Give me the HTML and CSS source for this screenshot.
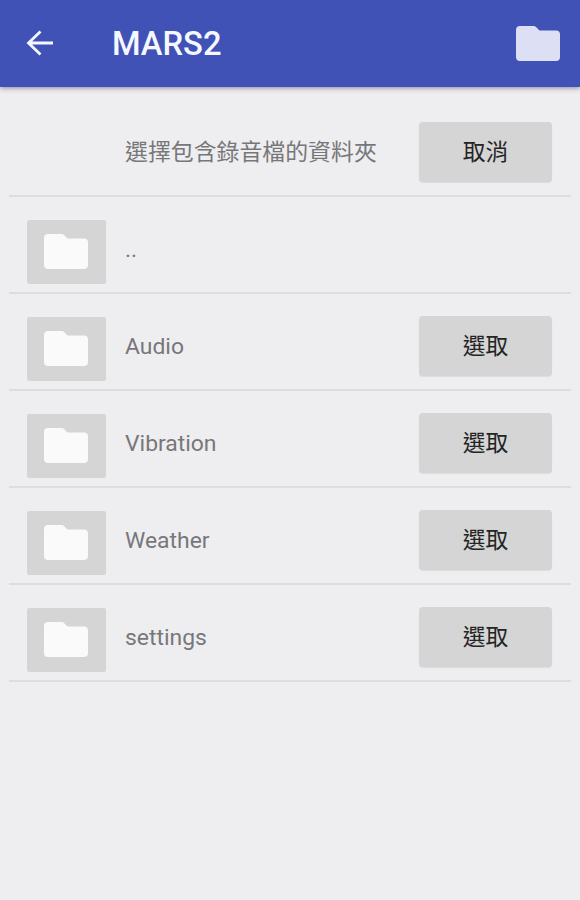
FILE: index.html
```html
<!DOCTYPE html>
<html lang="zh-Hant">
<head>
  <meta charset="UTF-8" />
  <meta name="viewport" content="width=device-width, initial-scale=1.0"/>
  <title>MARS2</title>
  <link rel="stylesheet" href="styles.css">
</head>
<body>
  <svg class="defs" width="0" height="0">
    <symbol id="folder" viewBox="0 0 44 35">
      <path d="M4 0H17.500Q19 0 20 1L23.500 4.500H40Q44 4.500 44 8.500V31Q44 35 40 35H4Q0 35 0 31V4Q0 0 4 0Z"/>
    </symbol>
  </svg>

  <header class="app-bar">
    <a href="#" class="back" aria-label="Back">
      <svg width="28" height="26" viewBox="0 0 28 26">
        <path d="M27 13H2.500M14.500 1.500L2.500 13L14.500 24.500"/>
      </svg>
    </a>
    <h1>MARS2</h1>
    <svg class="folder bar-folder"><use href="#folder"/></svg>
  </header>

  <main class="file-list">
    <div class="row">
      <div class="thumb empty"></div>
      <span class="name">選擇包含錄音檔的資料夾</span>
      <button type="button">取消</button>
    </div>
    <div class="row">
      <div class="thumb"><svg class="folder"><use href="#folder"/></svg></div>
      <span class="name">..</span>
    </div>
    <div class="row">
      <div class="thumb"><svg class="folder"><use href="#folder"/></svg></div>
      <span class="name">Audio</span>
      <button type="button">選取</button>
    </div>
    <div class="row">
      <div class="thumb"><svg class="folder"><use href="#folder"/></svg></div>
      <span class="name">Vibration</span>
      <button type="button">選取</button>
    </div>
    <div class="row">
      <div class="thumb"><svg class="folder"><use href="#folder"/></svg></div>
      <span class="name">Weather</span>
      <button type="button">選取</button>
    </div>
    <div class="row">
      <div class="thumb"><svg class="folder"><use href="#folder"/></svg></div>
      <span class="name">settings</span>
      <button type="button">選取</button>
    </div>
  </main>
</body>
</html>
```

FILE: styles.css
```css
* {
  margin: 0;
  padding: 0;
  box-sizing: border-box;
  font-family: Roboto, "Noto Sans CJK TC", sans-serif;
}

body {
  background-color: #eeeef0;
  min-height: 100vh;
}

.defs {
  display: block;
}

.app-bar {
  display: flex;
  align-items: center;
  height: 87px;
  padding: 0 20px 0 26px;
  background-color: #4052b6;
  box-shadow: 0 1px 5px rgba(40, 30, 90, 0.5);
}

.back {
  display: flex;
  width: 86px;
  padding-bottom: 2px;
}

.back path {
  fill: none;
  stroke: #f4f7ff;
  stroke-width: 2.8;
}

.app-bar h1 {
  flex: 1;
  padding-top: 1px;
  color: #f6f8ff;
  font-size: 32.7px;
  font-weight: 500;
  line-height: 40px;
}

.folder {
  display: block;
  width: 44px;
  height: 35px;
  fill: #fafafb;
}

.bar-folder {
  margin-bottom: 1px;
  fill: #dde0f4;
}

.file-list {
  padding: 13px 9px 0;
}

.row {
  display: flex;
  align-items: flex-start;
  height: 97px;
  padding: 22px 19px 0 18px;
  border-bottom: 2px solid #dddddf;
}

.thumb {
  display: flex;
  justify-content: center;
  align-items: center;
  width: 79px;
  height: 64px;
  margin: 1px 19px 0 0;
  padding: 0 1px 1px 0;
  background-color: #d5d5d6;
  border-radius: 2px;
}

.thumb.empty {
  visibility: hidden;
}

.name {
  flex: 1;
  color: #77777a;
  font-size: 22.9px;
  line-height: 62px;
  white-space: nowrap;
}

button {
  width: 133px;
  height: 60px;
  padding-top: 2px;
  border: none;
  border-radius: 4px;
  background-color: #d5d5d6;
  box-shadow: 0 1px 1px rgba(0, 0, 0, 0.08);
  color: #242424;
  font-size: 22.7px;
  line-height: 58px;
  cursor: pointer;
}
```
